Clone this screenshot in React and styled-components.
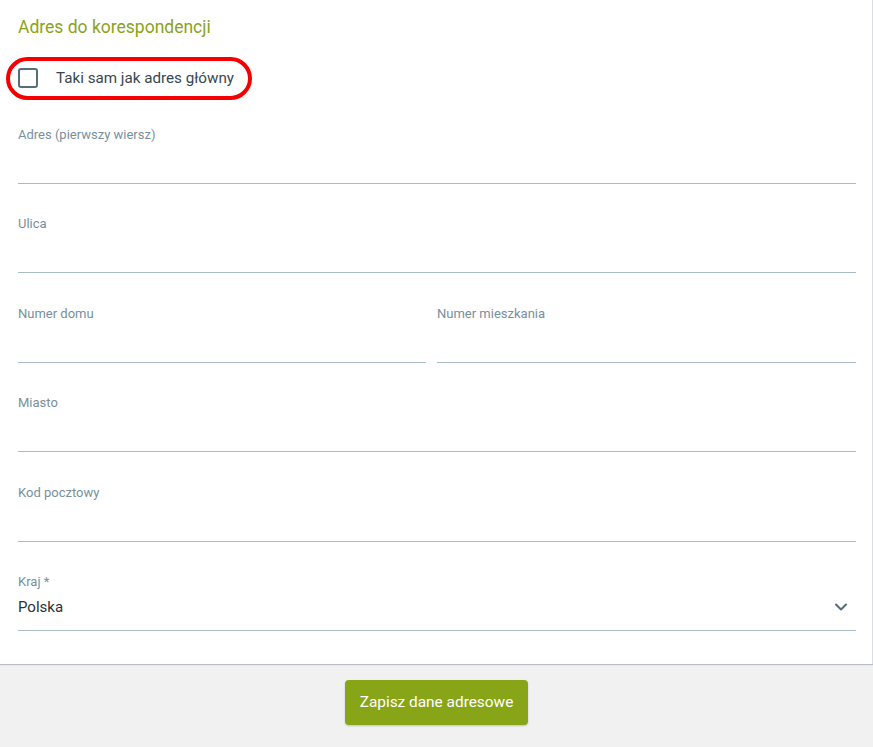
import styled, { createGlobalStyle } from "styled-components";
import { ChevronDown } from "lucide-react";

const GlobalStyle = createGlobalStyle`
  html, body {
    margin: 0;
    padding: 0;
    background: #f1f1f1;
    font-family: Roboto, "Liberation Sans", sans-serif;
  }
  * { box-sizing: border-box; }
`;

const Page = styled.div`
  min-height: 747px;
  background: #f1f1f1;
`;

const Card = styled.section`
  background: #fff;
  padding: 17px 16px 33px 18px;
  border-right: 1px solid #dcdde3;
  box-shadow: 0 1px 1px rgba(120, 125, 160, 0.45);
`;

const Title = styled.h2`
  margin: 0;
  font-size: 17.5px;
  line-height: 20px;
  font-weight: 400;
  color: #8aa31c;
`;

const Highlight = styled.label`
  display: inline-flex;
  align-items: center;
  gap: 18px;
  margin: 20px 0 0 -12px;
  padding: 7px 14px 8px 8px;
  border: 4px solid #f40000;
  border-radius: 22px;
  font-size: 15.2px;
  line-height: 20px;
  color: #37474f;
  cursor: pointer;
`;

const Box = styled.span`
  width: 20px;
  height: 20px;
  border: 2px solid #546e7a;
  border-radius: 3px;
`;

const Fields = styled.div`
  display: flex;
  flex-direction: column;
  gap: 32.4px;
  margin-top: 27px;
`;

const Row = styled.div`
  display: grid;
  grid-template-columns: 408fr 419fr;
  gap: 11px;
`;

const Field = styled.div`
  display: flex;
  flex-direction: column;
`;

const Label = styled.span`
  font-size: 13px;
  line-height: 15px;
  color: #78909c;
`;

const Input = styled.div`
  height: 42px;
  border-bottom: 1px solid #a9bcc3;
  display: flex;
  align-items: center;
  justify-content: space-between;
  padding-bottom: 4px;
  font-size: 15px;
  color: #263238;
  svg {
    color: #546e7a;
    margin-right: 5px;
  }
`;

const Footer = styled.div`
  display: flex;
  justify-content: center;
  padding-top: 16px;
`;

const Button = styled.button`
  width: 183px;
  height: 45px;
  border: none;
  border-radius: 4px;
  background: #88a517;
  color: #fff;
  font-family: Roboto, "Liberation Sans", sans-serif;
  font-size: 15.4px;
  box-shadow: 0 1px 2px rgba(0, 0, 0, 0.2);
  cursor: pointer;
`;

const TextField = ({ label, value, children }) => (
  <Field>
    <Label>{label}</Label>
    <Input>
      {value}
      {children}
    </Input>
  </Field>
);

export default function App() {
  return (
    <Page>
      <GlobalStyle />
      <Card>
        <Title>Adres do korespondencji</Title>
        <Highlight>
          <Box />
          Taki sam jak adres główny
        </Highlight>
        <Fields>
          <TextField label="Adres (pierwszy wiersz)" />
          <TextField label="Ulica" />
          <Row>
            <TextField label="Numer domu" />
            <TextField label="Numer mieszkania" />
          </Row>
          <TextField label="Miasto" />
          <TextField label="Kod pocztowy" />
          <TextField label="Kraj *" value="Polska">
            <ChevronDown size={20} strokeWidth={2.5} />
          </TextField>
        </Fields>
      </Card>
      <Footer>
        <Button>Zapisz dane adresowe</Button>
      </Footer>
    </Page>
  );
}
